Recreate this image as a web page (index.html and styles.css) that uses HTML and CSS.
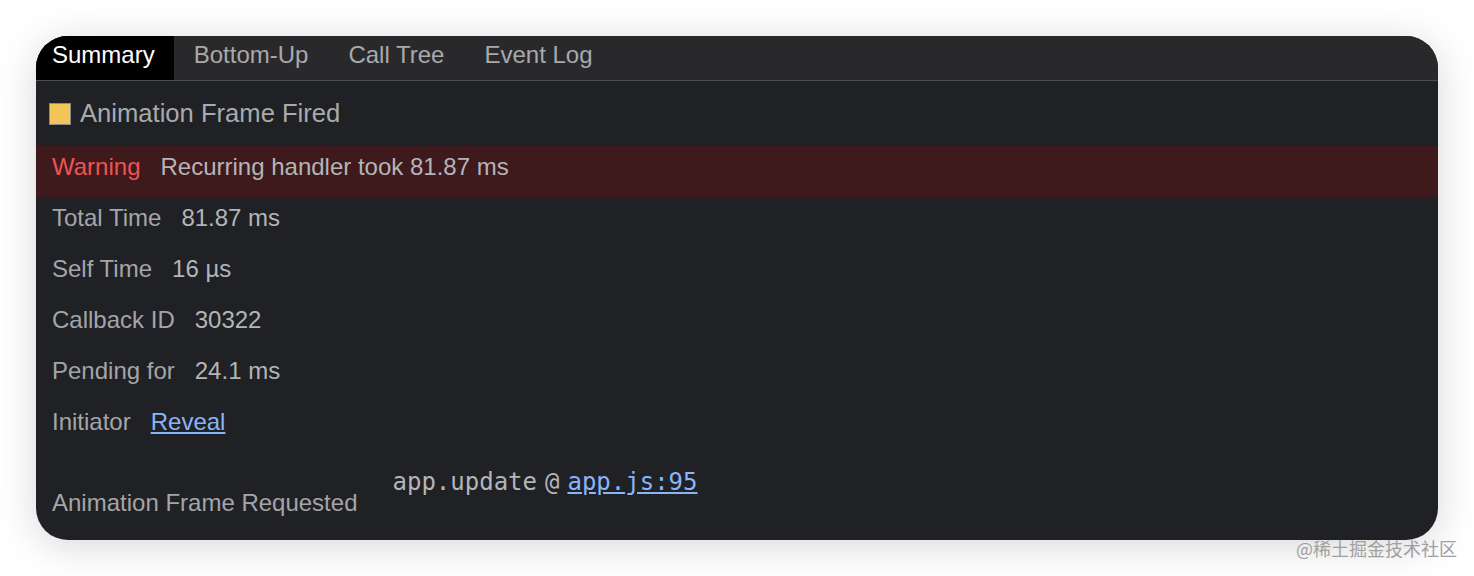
FILE: index.html
```html
<!DOCTYPE html>
<html>
<head>
<meta charset="utf-8">
<link rel="stylesheet" href="styles.css">
</head>
<body>
<div class="window">
  <div class="tabs">
    <div class="tab active">Summary</div>
    <div class="tab">Bottom-Up</div>
    <div class="tab">Call Tree</div>
    <div class="tab">Event Log</div>
  </div>
  <div class="content">
    <div class="title"><span class="swatch"></span><span>Animation Frame Fired</span></div>
    <div class="row warning"><span class="label warn">Warning</span><span class="value">Recurring handler took 81.87 ms</span></div>
    <div class="row"><span class="label">Total Time</span><span class="value">81.87 ms</span></div>
    <div class="row"><span class="label">Self Time</span><span class="value">16 µs</span></div>
    <div class="row"><span class="label">Callback ID</span><span class="value">30322</span></div>
    <div class="row"><span class="label">Pending for</span><span class="value">24.1 ms</span></div>
    <div class="row"><span class="label">Initiator</span><a class="value link">Reveal</a></div>
    <div class="stack">
      <span class="label stack-label">Animation Frame Requested</span>
      <span class="trace">app.update<span class="at">@</span><a class="link mono">app.js:95</a></span>
    </div>
  </div>
</div>
<div class="watermark">@稀土掘金技术社区</div>
</body>
</html>
```
FILE: styles.css
```css
html, body {
  margin: 0;
  padding: 0;
  background: #ffffff;
}
body {
  width: 1474px;
  height: 576px;
  overflow: hidden;
  position: relative;
  font-family: "Liberation Sans", Arial, sans-serif;
}
.window {
  margin: 36px 0 0 36px;
  width: 1402px;
  height: 504px;
  border-radius: 32px;
  overflow: hidden;
  background: #202124;
  box-shadow: 0 6px 40px rgba(0, 0, 0, 0.16);
  display: flex;
  flex-direction: column;
}
.tabs {
  display: flex;
  height: 44px;
  background: #29292c;
  border-bottom: 1px solid #4b4c50;
  flex-shrink: 0;
}
.tab {
  padding: 0 20px;
  font-size: 24px;
  line-height: 38px;
  color: #a9a9ab;
}
.tab.active {
  padding-left: 16px;
  padding-right: 19px;
  background: #000000;
  color: #ffffff;
}
.content {
  display: flex;
  flex-direction: column;
  flex: 1;
}
.title {
  height: 65px;
  display: flex;
  align-items: center;
  padding-left: 13px;
  font-size: 25.6px;
  color: #a9aaad;
}
.swatch {
  width: 20px;
  height: 20px;
  background: #f1c556;
  border: 1px solid #8a8a8a;
  margin-right: 9px;
}
.row {
  height: 51px;
  box-sizing: border-box;
  padding: 7px 0 0 16px;
  display: flex;
  font-size: 24px;
  line-height: 28px;
}
.row.warning {
  background: #3e1a1c;
}
.label {
  color: #a4a5a8;
  margin-right: 20px;
}
.label.warn {
  color: #ee5454;
}
.value {
  color: #b4b5b8;
}
.link {
  color: #8ab4f8;
  text-decoration: underline;
}
.stack {
  display: flex;
  padding-left: 16px;
  flex: 1;
}
.stack-label {
  font-size: 24px;
  line-height: 28px;
  margin-top: 37px;
  margin-right: 35px;
}
.trace {
  font-family: "DejaVu Sans Mono", monospace;
  font-size: 24px;
  line-height: 28px;
  margin-top: 16px;
  color: #b4b5b8;
}
.at {
  margin: 0 8px 0 8px;
}
.watermark {
  position: absolute;
  left: 1296px;
  top: 535px;
  font-family: "Noto Sans CJK SC", sans-serif;
  font-size: 18px;
  color: #a0a0a0;
}
```
